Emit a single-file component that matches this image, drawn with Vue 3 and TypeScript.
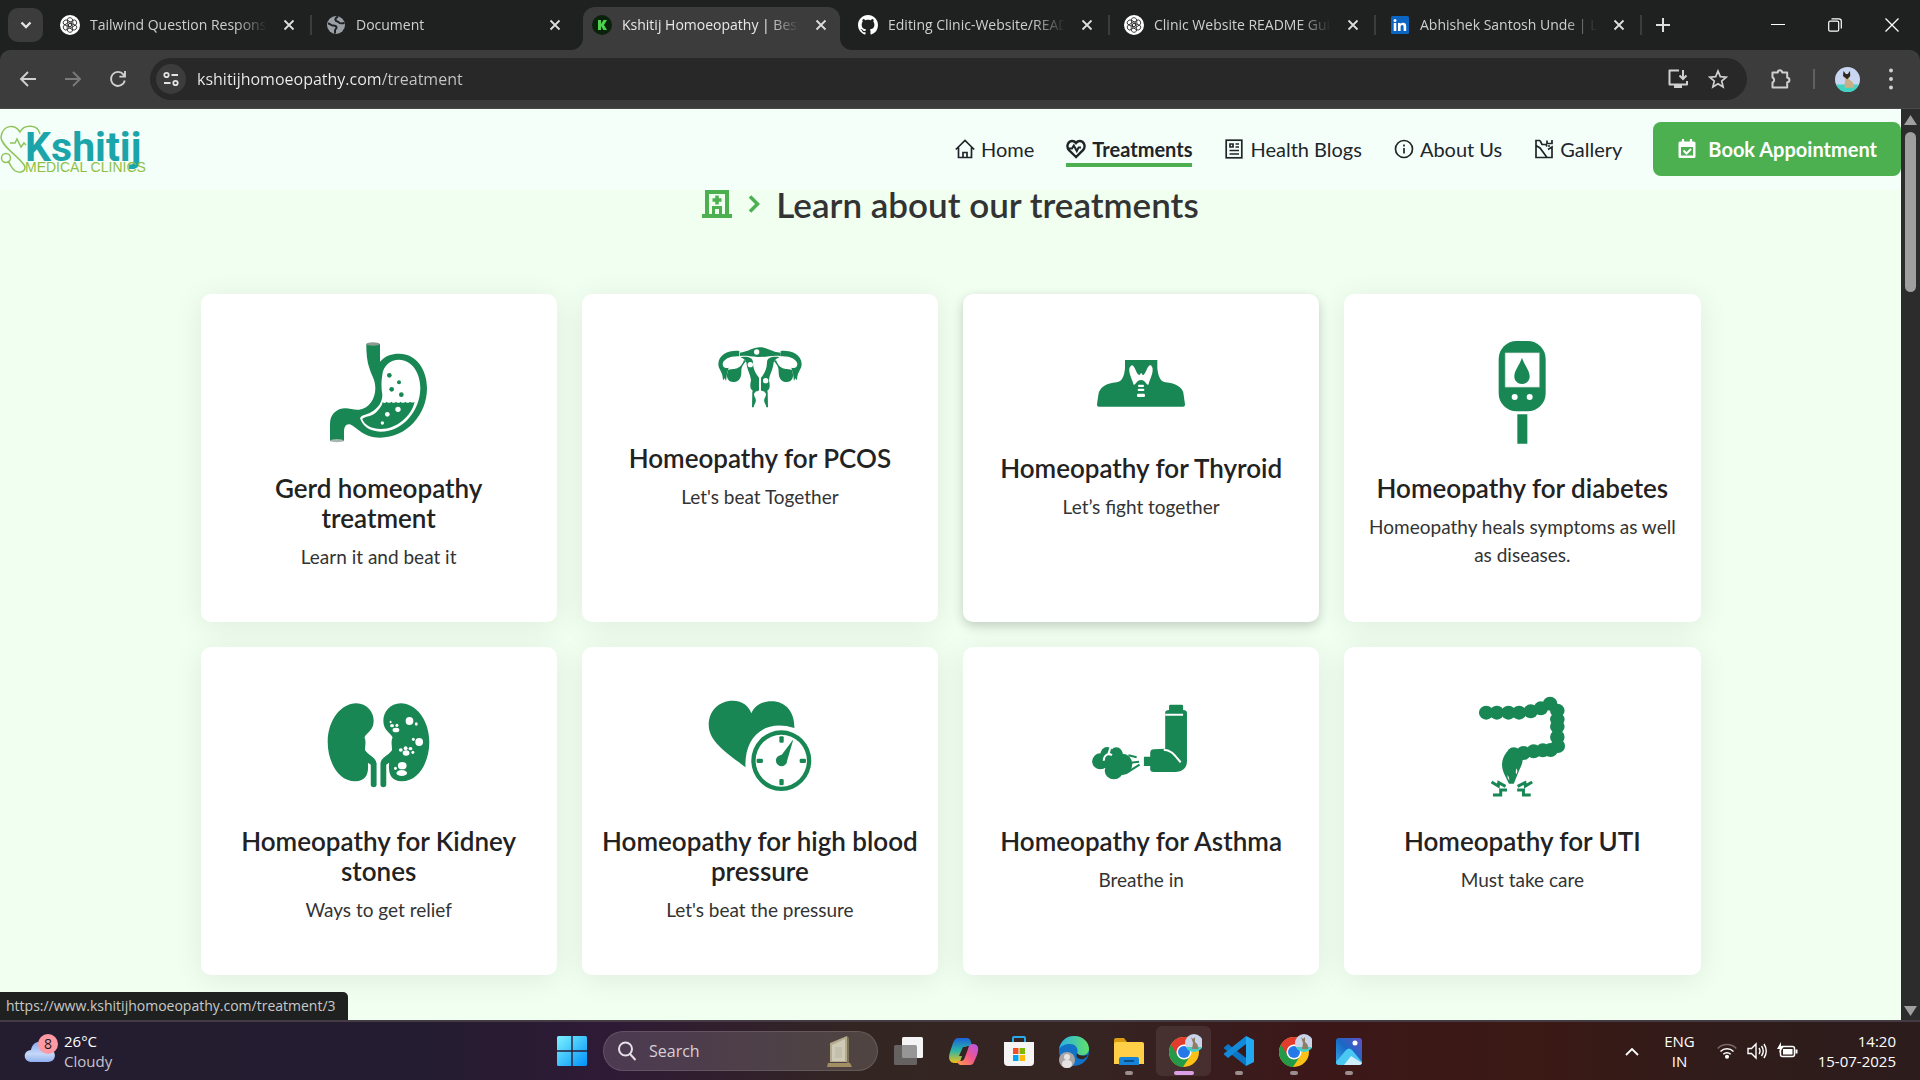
<script setup lang="ts">
import { ref } from 'vue'

interface Tab {
  title: string
  icon: 'gpt' | 'globe' | 'kshitij' | 'github' | 'linkedin'
  active?: boolean
  divider?: boolean
}

interface NavLink {
  label: string
  icon: 'home' | 'heart' | 'news' | 'info' | 'image'
  href: string
  active?: boolean
}

interface Treatment {
  id: number
  title: string
  text: string
  art: string
  hovered?: boolean
}

interface TaskApp {
  name: string
  running?: boolean
  active?: boolean
}

const url = ref('kshitijhomoeopathy.com/treatment')
const query = ref('')

const tabs: Tab[] = [
  { title: 'Tailwind Question Response', icon: 'gpt', divider: true },
  { title: 'Document', icon: 'globe' },
  { title: 'Kshitij Homoeopathy | Best H', icon: 'kshitij', active: true },
  { title: 'Editing Clinic-Website/READ', icon: 'github', divider: true },
  { title: 'Clinic Website README Guide', icon: 'gpt', divider: true },
  { title: 'Abhishek Santosh Unde | Link', icon: 'linkedin', divider: true },
]

const links: NavLink[] = [
  { label: 'Home', icon: 'home', href: '#home' },
  { label: 'Treatments', icon: 'heart', href: '#treatments', active: true },
  { label: 'Health Blogs', icon: 'news', href: '#blogs' },
  { label: 'About Us', icon: 'info', href: '#about' },
  { label: 'Gallery', icon: 'image', href: '#gallery' },
]

const treatments: Treatment[] = [
  { id: 1, title: 'Gerd homeopathy treatment', text: 'Learn it and beat it', art: 'stomach' },
  { id: 2, title: 'Homeopathy for PCOS', text: "Let's beat Together", art: 'uterus' },
  { id: 3, title: 'Homeopathy for Thyroid', text: 'Let’s fight together', art: 'thyroid', hovered: true },
  { id: 4, title: 'Homeopathy for diabetes', text: 'Homeopathy heals symptoms as well as diseases.', art: 'meter' },
  { id: 5, title: 'Homeopathy for Kidney stones', text: 'Ways to get relief', art: 'kidney' },
  { id: 6, title: 'Homeopathy for high blood pressure', text: "Let's beat the pressure", art: 'pressure' },
  { id: 7, title: 'Homeopathy for Asthma', text: 'Breathe in', art: 'inhaler' },
  { id: 8, title: 'Homeopathy for UTI', text: 'Must take care', art: 'tract' },
]

const colonBeads: [number, number][] = [
  [1107, 218], [1129, 218], [1153, 218], [1175, 218], [1199, 214], [1220, 205], [1239, 191],
  [1254, 212], [1254, 238], [1254, 260], [1254, 291], [1255, 318], [1240, 330], [1224, 331],
  [1205, 334], [1184, 339], [1164, 343],
]

const apps: TaskApp[] = [
  { name: 'Task View' },
  { name: 'Copilot' },
  { name: 'Store' },
  { name: 'Edge' },
  { name: 'Explorer', running: true },
  { name: 'Chrome', running: true, active: true },
  { name: 'Code', running: true },
  { name: 'Chrome Profile', running: true },
  { name: 'Photos', running: true },
]
</script>

<template>
  <div class="screen">
    <div class="tabstrip">
      <button class="tab-search" aria-label="Search tabs">
        <svg width="16" height="16" viewBox="0 0 16 16"><path d="M3.500 5.500 8 10l4.500-4.500" fill="none" stroke="#e3e3e3" stroke-width="2.400" /></svg>
      </button>
      <div v-for="(tab, i) in tabs" :key="i" class="tab" :class="{ active: tab.active, divider: tab.divider }">
        <svg v-if="tab.active" class="flare left" width="12" height="12" viewBox="0 0 12 12"><path d="M12 0v12H0A12 12 0 0 0 12 0z" fill="#3c3c3c" /></svg>
        <svg v-if="tab.active" class="flare right" width="12" height="12" viewBox="0 0 12 12"><path d="M0 0v12h12A12 12 0 0 1 0 0z" fill="#3c3c3c" /></svg>
        <svg class="favicon" width="20" height="20" viewBox="0 0 20 20">
          <template v-if="tab.icon === 'gpt'">
            <circle cx="10" cy="10" r="10" fill="#fff" />
            <g fill="none" stroke="#1a1a1a" stroke-width=".8">
              <path v-for="k in 6" :key="k" :transform="`rotate(${k * 60} 10 10)`" d="M7.600 3.800a2.900 2.900 0 0 1 5.200 1.700v4.600L10 11.700M7.600 3.800v4.400" />
            </g>
          </template>
          <template v-else-if="tab.icon === 'globe'">
            <circle cx="10" cy="10" r="9" fill="#9aa0a6" />
            <path d="M2 8.500c2 0 3 2 5 2s3 0 3.500 1.500-1.500 2-1.500 3.500v3M12 1.500c-1.500 1-3 1.500-2.500 3.500s3 1 3.500 2.500 3 1 5.500.5" fill="none" stroke="#202124" stroke-width="2" />
          </template>
          <template v-else-if="tab.icon === 'kshitij'">
            <circle cx="10" cy="10" r="10" fill="#0a210c" />
            <path d="M6 5h3v4l2.500-4H15l-3 5 3 5h-3.500L9 11v4H6z" fill="#4fd14f" />
          </template>
          <template v-else-if="tab.icon === 'github'">
            <path transform="scale(1.250)" fill="#fff" d="M8 0C3.580 0 0 3.580 0 8c0 3.540 2.290 6.530 5.470 7.590.4.070.55-.17.55-.38 0-.19-.01-.82-.01-1.490-2.010.37-2.530-.49-2.690-.94-.09-.23-.48-.94-.82-1.130-.28-.15-.68-.52-.01-.53.63-.01 1.080.58 1.230.82.72 1.210 1.870.87 2.330.66.07-.52.28-.87.51-1.070-1.780-.2-3.640-.89-3.640-3.950 0-.87.31-1.590.82-2.150-.08-.2-.36-1.020.08-2.120 0 0 .67-.21 2.200.82.64-.18 1.320-.27 2-.27s1.360.09 2 .27c1.530-1.040 2.200-.82 2.200-.82.44 1.100.16 1.920.08 2.120.51.56.82 1.270.82 2.150 0 3.070-1.870 3.750-3.650 3.950.29.25.54.73.54 1.480 0 1.070-.01 1.930-.01 2.200 0 .21.15.46.55.38A8.010 8.010 0 0 0 16 8c0-4.420-3.580-8-8-8z" />
          </template>
          <template v-else>
            <rect x="1" y="1" width="18" height="18" rx="1.500" fill="#0a66c2" />
            <path d="M3.700 8h2.600v8H3.700zM5 4a1.500 1.500 0 1 1 0 3 1.500 1.500 0 0 1 0-3zM8 8h2.500v1.100C11 8.300 12 7.800 13 7.800c2.600 0 3.200 1.600 3.200 3.900V16h-2.600v-3.900c0-1-.1-2.100-1.400-2.100s-1.600 1-1.600 2V16H8z" fill="#fff" />
          </template>
        </svg>
        <span class="tab-title">{{ tab.title }}</span>
        <button class="icon-button" aria-label="Close tab">
          <svg width="12" height="12" viewBox="0 0 12 12"><path d="m1.500 1.500 9 9m0-9-9 9" stroke="#dedede" stroke-width="1.800" /></svg>
        </button>
      </div>
      <button class="icon-button new-tab" aria-label="New tab">
        <svg width="14" height="14" viewBox="0 0 14 14"><path d="M7 0v14M0 7h14" stroke="#dedede" stroke-width="2" /></svg>
      </button>
      <div class="window-buttons">
        <button aria-label="Minimize"><svg width="14" height="14" viewBox="0 0 14 14"><path d="M0 6.500h14" stroke="#fff" /></svg></button>
        <button aria-label="Restore">
          <svg width="14" height="14" viewBox="0 0 14 14" fill="none" stroke="#fff" stroke-width="1.200"><rect x=".7" y="3.200" width="10" height="10" rx="1.500" /><path d="M3.500 .8H11A2.300 2.300 0 0 1 13.300 3v7.500" /></svg>
        </button>
        <button aria-label="Close"><svg width="14" height="14" viewBox="0 0 14 14"><path d="m.5.500 13 13m0-13-13 13" stroke="#fff" stroke-width="1.300" /></svg></button>
      </div>
    </div>

    <div class="toolbar">
      <div class="history">
        <button class="icon-button" aria-label="Back"><svg width="18" height="18" viewBox="0 0 18 18"><path d="M17 9H2.500M9 2 2 9l7 7" fill="none" stroke="#d0d0d0" stroke-width="1.900" /></svg></button>
        <button class="icon-button" aria-label="Forward"><svg width="18" height="18" viewBox="0 0 18 18"><path d="M1 9h14.500M9 2l7 7-7 7" fill="none" stroke="#7a7a7a" stroke-width="1.900" /></svg></button>
        <button class="icon-button" aria-label="Reload"><svg width="18" height="18" viewBox="0 0 18 18"><path d="M15.800 10.500A7 7 0 1 1 14.500 4.600L16 6.200M16 1v5.600h-5.600" fill="none" stroke="#d0d0d0" stroke-width="1.900" /></svg></button>
      </div>
      <div class="omnibox">
        <button class="site-info" aria-label="Site information">
          <svg width="16" height="16" viewBox="0 0 16 16" fill="none" stroke="#e3e3e3" stroke-width="1.800"><circle cx="3.500" cy="4" r="2.200" /><path d="M8.500 4H15M1 12h6.500" /><circle cx="12.500" cy="12" r="2.200" /></svg>
        </button>
        <input v-model="url" class="url" type="text" aria-label="Address" />
        <button class="icon-button" aria-label="Install">
          <svg width="22" height="22" viewBox="0 0 22 22"><path d="M12 2.500H2.500V16.500H20V13" fill="none" stroke="#d0d0d0" stroke-width="2" stroke-linejoin="round" /><path d="M7 17h8v3H7z" fill="#d0d0d0" /><path d="M16 2v8.500M12.500 7.500 16 11l3.500-3.500" fill="none" stroke="#d0d0d0" stroke-width="2" /></svg>
        </button>
        <button class="icon-button" aria-label="Bookmark">
          <svg width="20" height="20" viewBox="0 0 20 20"><path d="m10 2 2.300 5.600 6 .5-4.600 3.900 1.400 5.900L10 14.700l-5.100 3.200 1.400-5.900-4.600-3.900 6-.5z" fill="none" stroke="#d0d0d0" stroke-width="1.700" /></svg>
        </button>
      </div>
      <div class="actions">
        <button class="icon-button" aria-label="Extensions">
          <svg width="22" height="22" viewBox="0 0 22 22"><path d="M2.500 4.500h5.300a2.200 2.200 0 0 1 4.400 0h5v5.300a2.200 2.200 0 0 1 0 4.400v5.300H2.500v-5a2.700 2.700 0 0 0 0-5z" fill="none" stroke="#d0d0d0" stroke-width="2" stroke-linejoin="round" /></svg>
        </button>
        <span class="rule"></span>
        <button class="icon-button" aria-label="Profile">
          <svg width="25" height="25" viewBox="0 0 25 25">
            <circle cx="12.500" cy="12.500" r="12.500" fill="#c9d6f2" /><path d="M1 17.500h23a12.500 12.500 0 0 1-23 0z" fill="#41d3c2" />
            <path d="M8.500 4l2.300 3h2L15 4l.3 5-2 3c3 1.500 6 4 6.200 8.500l-9.500.5c-1-4 .5-6 .3-9L8 9z" fill="#c9ae87" /><path d="M8.500 4l2.300 3h2L15 4l.2 5-2.900 3.200L8 9z" fill="#2d2622" />
          </svg>
        </button>
        <button class="icon-button" aria-label="Menu"><svg width="20" height="24" viewBox="0 0 20 24" fill="#d0d0d0"><circle cx="10" cy="3.500" r="2" /><circle cx="10" cy="12" r="2" /><circle cx="10" cy="20.500" r="2" /></svg></button>
      </div>
    </div>

    <div class="viewport">
      <div class="site">
        <header class="site-header">
          <a class="logo" href="#home" aria-label="Kshitij Medical Clinics">
            <svg width="150" height="56" viewBox="0 0 150 56">
              <g fill="none" stroke="#8fc45a" stroke-width="1.500">
                <path d="M40 13C38 3 24 3 20 11 15 3 3 3 1 16c0 10 22 22 24 30 0 7-10 7-14-1l-3-5" /><circle cx="6" cy="37" r="4.500" /><path d="M10 22h5l2-4 4 8 3-4 2 2" />
              </g>
              <text x="25" y="40" class="logo-name">Kshitij</text>
              <text x="25" y="51" class="logo-sub">MEDICAL CLINICS</text>
            </svg>
          </a>
          <nav class="links">
            <a v-for="link in links" :key="link.label" :href="link.href" :class="{ current: link.active }">
              <svg width="20" height="20" viewBox="0 0 20 20" fill="none" stroke="currentColor" stroke-width="1.700">
                <path v-if="link.icon === 'home'" d="M.8 10.500 10 1.500l9.200 9M3.500 8.500v10h13v-10M8 18.500v-5h4v5" />
                <template v-else-if="link.icon === 'heart'"><path d="M10 18 3 11.200C-.5 7 2.500 2 6.200 2 8.500 2 10 4 10 4s1.500-2 3.800-2C17.500 2 20.500 7 17 11.200z" stroke-width="2.400" /><path d="M1 9.500h5l1.800-3 3 5.500 1.800-3.500H15" stroke-width="2" /></template>
                <template v-else-if="link.icon === 'news'"><rect x="2.200" y="1.200" width="15.600" height="17.600" /><path d="M6 5h3v3H6zM11.500 5H15M11.500 8H15M5.500 11.500H15M5.500 15H15" /></template>
                <template v-else-if="link.icon === 'info'"><circle cx="10" cy="10" r="8.500" /><path d="M10 9v5.500M10 5.500v2" /></template>
                <path v-else d="M6 1.500H2v5l4 2.500 7 9.500M2 6v12.500H18V8l-4 2.500M6 1.500 8 5.500h4l1 2M13 1.500v3h5V1M14 7h2" />
              </svg>
              <span>{{ link.label }}</span>
            </a>
          </nav>
          <button class="book">
            <svg width="20" height="20" viewBox="0 0 20 20"><path d="M3 2.500h14a1.500 1.500 0 0 1 1.500 1.500v13.500A1.500 1.500 0 0 1 17 19H3a1.500 1.500 0 0 1-1.500-1.500V4A1.500 1.500 0 0 1 3 2.500zM4 8v8.500h12V8z" fill="#fff" fill-rule="evenodd" /><path d="M6 0v5M14 0v5" stroke="#fff" stroke-width="2.200" /><path d="m6.500 11.500 3 3 4.500-4.500" fill="none" stroke="#fff" stroke-width="2" /></svg>
            <span>Book Appointment</span>
          </button>
        </header>

        <main>
          <h1 class="heading">
            <svg width="30" height="28" viewBox="0 0 30 28"><path d="M3 0h24v24h3v4H0v-4h3zM7 4v20h3v-8h10v8h3V4zM13 19v5h4v-5z" fill="#4caf50" fill-rule="evenodd" /><path d="M15 5.500v9M10.500 10h9" stroke="#4caf50" stroke-width="3.500" /></svg>
            <svg width="12" height="18" viewBox="0 0 12 18"><path d="m2 1.500 7.500 7.500L2 16.500" fill="none" stroke="#4caf50" stroke-width="3.500" /></svg>
            <span>Learn about our treatments</span>
          </h1>

          <section class="grid">
            <a v-for="item in treatments" :key="item.id" class="card" :class="{ hovered: item.hovered }" :href="`#treatment-${item.id}`">
              <svg v-if="item.art === 'stomach'" width="120" height="154" viewBox="387 117 360 462" fill="#198754">
                <path d="M529 192h41v53c16-18 34-24 57-24 52 0 84 48 84 104 0 78-60 148-141 148-50 0-68-30-90-40-12-3-18 8-18 22v28h-42v-52c0-28 20-46 46-46 14 0 28 6 42 4 30-3 48-34 48-64 0-24-8-32-16-55-10-26-11-52-11-78z" />
                <path fill="#fff" d="M577 284c3-28 25-45 50-45 40 0 64 42 64 84 0 70-54 132-119 132-32 0-54-16-62-40 3-10 20-10 33-18 22-12 34-32 34-52-3-20-4-40 0-61z" />
                <path d="M578 366q6 6 12-1 7 7 14 0 7 7 14 0 7 7 14 0 7 7 14 0 7 7 14 0 7 5 14 1c-10 42-54 81-101 81-28 0-48-10-56-29 3-9 26-7 39-19 12-10 21-24 22-33z" />
                <circle cx="598" cy="286" r="7" /><circle cx="627" cy="307" r="6" /><circle cx="605" cy="328" r="7" /><circle cx="634" cy="344" r="7" />
                <g fill="#fff"><circle cx="624" cy="388" r="8" /><circle cx="592" cy="403" r="7" /><circle cx="577" cy="429" r="5" /></g>
                <ellipse cx="549" cy="192" rx="20" ry="5" fill="#8c9a91" /><ellipse cx="441" cy="482" rx="20" ry="5" fill="#a6b8ae" />
              </svg>
              <svg v-else-if="item.art === 'uterus'" width="120" height="124" viewBox="390 117 360 372" fill="#198754">
                <path d="M510 218c28-3 36-16 60-16s32 13 62 16v10c-26-3-38 3-62 3s-34-6-60-3z" />
                <g v-for="side in ['', 'translate(1140 0) scale(-1 1)']" :key="side" :transform="side">
                  <path d="M508 213c-30-3-63 10-63 40 0 16 14 22 14 48l5-6 4 8 3-22 5-18c-10 3-18 0-18-12 3-14 24-24 50-22z" />
                  <path d="M474 270c14-6 36 4 48-30l6 4c-12 14-14 18-14 34 0 18-10 28-24 28-16 0-24-16-16-34z" />
                  <path d="M511 232c18-4 38 0 38 15 0 20 8 34 18 46v38c-6 6-10 0-12 8l-6-6c-10-6-9-18-6-32-2-20-12-30-14-54-4-8-10-12-18-15zM547 334h8c-2 6-4 8-2 14 6 12 6 16 0 26l-2 8h-5z" />
                </g>
                <g fill="#fff"><circle cx="560" cy="216" r="8" /><circle cx="541" cy="254" r="8" /><circle cx="587" cy="302" r="8" /></g>
              </svg>
              <svg v-else-if="item.art === 'thyroid'" width="120" height="134" viewBox="393 117 360 402" fill="#198754">
                <path d="M525 240h97v25c2 24 10 40 24 42 32 3 55 16 55 38l4 28q1 7-5 7H446q-6 0-5-7l4-28c2-22 25-36 55-38 16-2 23-18 25-42z" />
                <g fill="#fff"><path d="M545 256c8-4 14 26 21 28q3 2 5-2 2-6 5 0 2 4 5 2c8-6 12-32 22-28 12 12 0 34-8 58-6 3-8-14-22-14s-16 17-22 14c-8-24-22-48-6-58z" /><rect x="564" y="314" width="18" height="7" rx="3" /><rect x="563" y="326" width="20" height="7" rx="3" /><rect x="561" y="341" width="24" height="10" rx="4" /></g>
              </svg>
              <svg v-else-if="item.art === 'meter'" width="120" height="154" viewBox="397 117 360 462" fill="#198754">
                <rect x="507" y="183" width="141" height="211" rx="54" /><path d="M526 218h104v104H526z" fill="#fff" stroke="#6da58a" stroke-width="2" />
                <path d="M577 233c8 24 23 38 23 56 0 14-10 23-23 23s-23-9-23-23c0-18 15-32 23-56zM563 403h30v88h-30z" /><circle cx="555" cy="351" r="9" fill="#fff" /><circle cx="600" cy="351" r="9" fill="#fff" />
              </svg>
              <svg v-else-if="item.art === 'kidney'" width="120" height="154" viewBox="266 96 248 462" preserveAspectRatio="none" fill="#198754">
                <g v-for="side in ['', 'translate(778 0) scale(-1 1)']" :key="side" :transform="side">
                  <path d="M343 190c22 0 36 26 36 52 0 30-14 34-19 50 4 14 1 26 1 38 6 16 24 22 24 42v64q-1 6-6 6t-6-6v-62l-6-6c2 30-2 56-26 56-36 0-57-60-57-118 0-66 28-116 59-116z" />
                </g>
                <g fill="#fff"><ellipse cx="453" cy="243" rx="8" ry="12" /><ellipse cx="467" cy="252" rx="3" ry="5" /><ellipse cx="425" cy="270" rx="7" ry="7" /><ellipse cx="417" cy="257" rx="4" ry="5" /><ellipse cx="427" cy="256" rx="3" ry="5" /><ellipse cx="414" cy="246" rx="2" ry="4" /><ellipse cx="473" cy="306" rx="8" ry="12" /><ellipse cx="461" cy="298" rx="3" ry="5" /><ellipse cx="446" cy="339" rx="7" ry="8" /><ellipse cx="435" cy="330" rx="4" ry="5" /><ellipse cx="445" cy="325" rx="4" ry="6" /><ellipse cx="455" cy="326" rx="4" ry="5" /><ellipse cx="460" cy="337" rx="3" ry="5" /><ellipse cx="438" cy="377" rx="9" ry="11" /><ellipse cx="437" cy="399" rx="11" ry="9" /><ellipse cx="424" cy="385" rx="3" ry="5" /></g>
              </svg>
              <svg v-else-if="item.art === 'pressure'" width="120" height="154" viewBox="1052 96 248 462" preserveAspectRatio="none" fill="#198754">
                <path d="M1146 382c-34-40-76-74-76-128 0-40 20-72 50-72 20 0 34 18 38 38 6-20 20-36 42-36 30 0 48 34 47 80-60-28-104 24-101 118z" />
                <path d="M1220 271a62 91 0 1 1 0 182 62 91 0 0 1 0-182zm0 13a53 78 0 1 0 0 156 53 78 0 0 0 0-156z" fill-rule="evenodd" />
                <path d="M1245 298 1232 362c0 22-23 22-23 0 0-12 6-16 12-18z" /><rect x="1216" y="289" width="9" height="19" rx="3" /><rect x="1216" y="417" width="9" height="19" rx="3" /><rect x="1169" y="356" width="13" height="13" rx="3" /><rect x="1258" y="356" width="13" height="13" rx="3" />
              </svg>
              <svg v-else-if="item.art === 'inhaler'" width="120" height="154" viewBox="270 96 248 462" preserveAspectRatio="none" fill="#198754">
                <path d="M455 194h23q3 0 3 4v12q8 0 8 10v144c0 20-10 32-24 32h-45q-6 0-7-6v-12h-13v-28h13v-12q1-10 7-10l24-2V218q0-8 8-8v-12q0-4 3-4z" />
                <ellipse cx="310" cy="364" rx="17" ry="24" /><ellipse cx="324" cy="345" rx="14" ry="24" /><ellipse cx="343" cy="346" rx="14" ry="24" /><ellipse cx="338" cy="392" rx="19" ry="26" /><ellipse cx="356" cy="373" rx="20" ry="32" /><ellipse cx="335" cy="370" rx="18" ry="26" />
                <g fill="none" stroke="#198754" stroke-width="2"><path vector-effect="non-scaling-stroke" d="M368 346l17 6M372 368l18-3M365 398l26-24" /></g>
                <g fill="none" stroke="#fff" stroke-width="2"><path vector-effect="non-scaling-stroke" d="M444 224h37M441 329c16 0 24 20 35 38M317 362c0-18 10-24 17-16M331 322l-4 18" /></g>
              </svg>
              <svg v-else width="120" height="154" viewBox="1057 96 248 462" preserveAspectRatio="none" fill="#198754">
                <ellipse v-for="([x, y], n) in colonBeads" :key="n" :cx="x" :cy="y" rx="15" ry="21" />
                <path d="M1150 335c-14 24-12 50-4 72l8 24h10l10-36c4-14 10-26 8-46z" />
                <path d="M1170 385q3 8 0 18-4-6 0-18zM1151 405q4 6 4 17-5-6-4-17z" fill="#fff" />
                <path d="M1118 426l14 12 1-10 14 11M1202 426l-14 12-1-10-15 11M1121 465h16v-15h13M1199 465h-15v-15h-13" fill="none" stroke="#198754" stroke-width="3" vector-effect="non-scaling-stroke" />
              </svg>
              <h2>{{ item.title }}</h2>
              <p>{{ item.text }}</p>
            </a>
          </section>
        </main>
      </div>
      <div class="scrollbar">
        <svg width="13" height="11" viewBox="0 0 13 11"><path d="M6.500 0 13 10H0z" fill="#a0a0a0" /></svg>
        <span class="thumb"></span>
        <svg width="13" height="11" viewBox="0 0 13 11"><path d="M6.500 11 13 1H0z" fill="#a0a0a0" /></svg>
      </div>
      <div class="status">https://www.kshitijhomoeopathy.com/treatment/3</div>
    </div>

    <footer class="taskbar">
      <button class="weather">
        <svg width="34" height="34" viewBox="0 0 34 34">
          <defs><linearGradient id="cloud" x1="0" y1="0" x2="0" y2="1"><stop offset="0" stop-color="#86a8f0" /><stop offset=".6" stop-color="#c6d8f7" /><stop offset="1" stop-color="#8fb0ef" /></linearGradient></defs>
          <path d="M8 28c-9 0-10-11-1-12C9 5 23 5 25 15c8 1 8 13-1 13z" fill="url(#cloud)" /><circle cx="24" cy="10" r="10" fill="#ff99a4" /><text x="24" y="15" text-anchor="middle" font-size="14" fill="#1b1b1b">8</text>
        </svg>
        <span class="weather-text"><span>26°C</span><span class="dim">Cloudy</span></span>
      </button>

      <div class="dock">
        <button class="app" aria-label="Start">
          <svg width="30" height="30" viewBox="0 0 30 30"><defs><linearGradient id="win" x1="0" y1="0" x2="1" y2="1"><stop offset="0" stop-color="#7df3ff" /><stop offset="1" stop-color="#0091f8" /></linearGradient></defs><path d="M0 1.500Q0 0 1.500 0H14.300V14.300H0zM15.700 0H28.500Q30 0 30 1.500V14.300H15.700zM0 15.700H14.300V30H1.500Q0 30 0 28.500zM15.700 15.700H30V28.500Q30 30 28.500 30H15.700z" fill="url(#win)" /></svg>
        </button>
        <label class="search">
          <svg width="20" height="20" viewBox="0 0 20 20" fill="none" stroke="#e8e0e8" stroke-width="2"><circle cx="8.500" cy="8" r="6.500" /><path d="m13 13 5.500 6" /></svg>
          <input v-model="query" type="text" placeholder="Search" />
          <svg width="26" height="32" viewBox="0 0 26 32"><path d="M3 8 20 1v26H3z" fill="#b5aa8c" /><path d="M5 10 18 4v22H5z" fill="#cfcab6" /><path d="M20 1l2 2v25h-2z" fill="#7d7256" /><path d="M8 12h7v11H8z" fill="#c3bfac" /><path d="M1 28h22l2 4H0z" fill="#a38e63" /></svg>
        </label>
        <button v-for="app in apps" :key="app.name" class="app" :class="{ active: app.active, running: app.running }" :aria-label="app.name">
          <svg width="36" height="36" viewBox="0 0 36 36">
            <template v-if="app.name === 'Task View'"><rect x="11" y="4" width="21" height="21" rx="1.500" fill="#f4f4f4" /><rect x="3" y="12" width="23" height="20" rx="1.500" fill="#777" fill-opacity=".75" /></template>
            <template v-else-if="app.name === 'Copilot'">
              <defs><linearGradient id="cpa" x1="0" y1="0" x2="0" y2="1"><stop offset="0" stop-color="#1b62d8" /><stop offset=".5" stop-color="#2bb5a8" /><stop offset="1" stop-color="#f2c014" /></linearGradient><linearGradient id="cpb" x1="1" y1="0" x2="0" y2="1"><stop offset="0" stop-color="#b157ee" /><stop offset=".5" stop-color="#f0568c" /><stop offset="1" stop-color="#ffa144" /></linearGradient></defs>
              <path d="M12 5h9q3 0 4 4l1 4h-4q-3 0-4 4l-3 9q-1 4-4 4H9c-6 0-7-5-5-11l3-9q2-5 5-5z" fill="url(#cpa)" /><path d="M24 32h-9q-3 0-4-4h4q3 0 4-4l3-8q1-5 5-5c6 0 6 5 4 11l-3 7q-1 3-4 3z" fill="url(#cpb)" /><path d="M17 14h4l-3 9h-5z" fill="#33251f" />
            </template>
            <template v-else-if="app.name === 'Store'"><path d="M12 10V5q0-1 1-1h10q1 0 1 1v5" fill="none" stroke="#29a9ea" stroke-width="2" /><path d="M3 9h30v20q0 4-4 4H7q-4 0-4-4z" fill="#f5f5f5" /><path d="M12 15h5.500v6H12z" fill="#f25022" /><path d="M18.500 15H24v6h-5.500z" fill="#7fba00" /><path d="M12 22h5.500v6H12z" fill="#00a4ef" /><path d="M18.500 22H24v6h-5.500z" fill="#ffb900" /></template>
            <template v-else-if="app.name === 'Edge'">
              <defs><linearGradient id="edge" x1="0" y1="0" x2="1" y2="0"><stop offset="0" stop-color="#2bb0e8" /><stop offset="1" stop-color="#5fe06a" /></linearGradient></defs>
              <circle cx="18" cy="18" r="15" fill="#1272c8" /><path d="M3 16C5 7 11 3 18 3c9 0 15 6 15 13 0 6-8 8-12 5 2-5-1-10-7-10-5 0-9 2-11 5z" fill="url(#edge)" /><path d="M21 20q3 4 11 2-3 5-8 4-5-1-3-6z" fill="#33251f" /><circle cx="11" cy="27" r="8" fill="#a9a6a5" /><circle cx="11" cy="24" r="3" fill="#e6e3e2" /><path d="M6 31q0-4 5-4t5 4-5 4-5-4z" fill="#e6e3e2" />
            </template>
            <template v-else-if="app.name === 'Explorer'"><path d="M3 7q0-2 2-2h8l3 4h15v7H3z" fill="#d89b12" /><path d="M3 11q0-2 2-2h26q2 0 2 2v20H3z" fill="#ffcf48" /><path d="M8 32v-6q0-2 2-2h16q2 0 2 2v6z" fill="#1583d8" /><path d="M13 28h10" stroke="#0b4d87" stroke-width="2" /></template>
            <template v-else-if="app.name.startsWith('Chrome')">
              <circle cx="18" cy="19" r="15" fill="#fbc116" /><path d="M18 19 5 11.500a15 15 0 0 0 12 22.500l7.500-11.500z" fill="#229a48" /><path d="M5 11.500A15 15 0 0 1 31 11.500H18L11.500 22.500z" fill="#e33b2e" /><circle cx="18" cy="19" r="7.500" fill="#fff" /><circle cx="18" cy="19" r="6" fill="#2678e8" />
              <circle cx="28" cy="10" r="9" fill="#c9d3ea" /><path d="M20 14h16a9 9 0 0 1-16 0z" fill="#45cfc2" /><path d="M25 4l2 2 2-2v5q4 3 3 7h-6l1-6z" fill="#8f7d66" />
            </template>
            <template v-else-if="app.name === 'Code'"><path d="M25 3 33 7v22l-8 4z" fill="#23a9f2" /><path d="M3 14.500 7 11l18 14v8L3 15.500z" fill="#0a76c4" /><path d="M3 21.500 7 25l18-14V3L3 20.500z" fill="#1389d8" /></template>
            <template v-else>
              <defs><linearGradient id="photo" x1="1" y1="0" x2="0" y2="1"><stop offset="0" stop-color="#654fc2" /><stop offset=".5" stop-color="#1769c5" /><stop offset="1" stop-color="#3aa7ea" /></linearGradient></defs>
              <rect x="5" y="5" width="26" height="27" rx="3" fill="url(#photo)" /><circle cx="24" cy="10" r="2.500" fill="#fff" /><path d="M5 29 15 17q3-3 6 0l10 12q0 3-3 3H8q-3 0-3-3z" fill="#49c8f3" /><path d="m13 32 7-9 11 7q-1 2-3 2z" fill="#d0eefa" />
            </template>
          </svg>
        </button>
      </div>

      <div class="tray">
        <button class="tray-button" aria-label="Show hidden icons"><svg width="14" height="9" viewBox="0 0 14 9"><path d="m1 8 6-6 6 6" fill="none" stroke="#fff" stroke-width="1.800" /></svg></button>
        <div class="language"><span>ENG</span><span>IN</span></div>
        <div class="signals">
          <svg width="20" height="16" viewBox="0 0 20 16" fill="none" stroke="#fff" stroke-width="1.500"><path d="M.7 5.500a13 13 0 0 1 18.600 0" stroke="#7a6867" /><path d="M3.500 8.500a9.200 9.200 0 0 1 13 0M6.300 11.200a5.300 5.300 0 0 1 7.400 0" /><circle cx="10" cy="13.800" r="1.300" fill="#fff" /></svg>
          <svg width="20" height="18" viewBox="0 0 20 18" fill="none" stroke="#fff" stroke-width="1.400"><path d="M1 6.500h3.500L9 2v14l-4.500-4.500H1zM12 6q2 3 0 6M14.500 4q3.500 5 0 10M17 2q4.500 7 0 14" /></svg>
          <svg width="21" height="18" viewBox="0 0 21 18"><rect x="3.500" y="4.500" width="14" height="10" rx="2" fill="none" stroke="#fff" stroke-width="1.500" /><path d="M6 7h9.500v5.500H6zM18.500 7.500h2v4h-2z" fill="#fff" /><path d="M4 0 0 7h3l-1 4 4.500-6H4z" fill="#fff" /></svg>
        </div>
        <div class="clock"><span>14:20</span><span>15-07-2025</span></div>
      </div>
    </footer>
  </div>
</template>

<style>
body {
  margin: 0;
  background: #1f2120;
}
</style>

<style scoped>
* {
  box-sizing: border-box;
}
.screen {
  display: flex;
  flex-direction: column;
  height: 100vh;
  overflow: hidden;
  font-family: "Open Sans", "Noto Sans", sans-serif;
  font-size: 14px;
}
button {
  display: flex;
  align-items: center;
  justify-content: center;
  padding: 0;
  border: 0;
  background: none;
  font: inherit;
  color: inherit;
}
svg {
  flex: none;
  display: block;
}
.icon-button {
  width: 24px;
  height: 24px;
  flex: none;
}

/* Browser chrome */
.tabstrip {
  display: flex;
  align-items: center;
  height: 50px;
  flex: none;
  padding-left: 8px;
  background: #1f2120;
  color: #cfcfcf;
}
.tab-search {
  width: 35px;
  height: 34px;
  flex: none;
  margin-right: 3px;
  border-radius: 10px;
  background: #3c3c3c;
}
.tab {
  position: relative;
  display: flex;
  align-items: center;
  flex: 0 1 266px;
  min-width: 0;
  height: 50px;
  padding: 0 11px 0 14px;
}
.tab.divider::after {
  content: "";
  position: absolute;
  right: 0;
  top: 15px;
  width: 2px;
  height: 20px;
  background: #3c3c3c;
}
.tab.active {
  color: #e8e8e8;
}
.tab.active::before {
  content: "";
  position: absolute;
  inset: 7px 4px 0 5px;
  border-radius: 12px 12px 0 0;
  background: #3c3c3c;
}
.flare {
  position: absolute;
  bottom: 0;
}
.flare.left {
  left: -7px;
}
.flare.right {
  right: -8px;
}
.favicon,
.tab-title,
.tab .icon-button {
  position: relative;
}
.tab-title {
  flex: 1;
  min-width: 0;
  margin: 0 10px;
  overflow: hidden;
  white-space: nowrap;
  line-height: 20px;
  mask-image: linear-gradient(90deg, #000 82%, transparent);
}
.new-tab {
  margin-left: 9px;
}
.window-buttons {
  display: flex;
  margin-left: auto;
}
.window-buttons button {
  width: 57px;
  height: 50px;
}
.toolbar {
  display: flex;
  align-items: center;
  height: 59px;
  flex: none;
  border-radius: 10px 10px 0 0;
  border-bottom: 1px solid #4a4a4a;
  background: #3c3c3c;
}
.history {
  display: flex;
  gap: 21px;
  padding: 0 20px 0 16px;
}
.omnibox {
  display: flex;
  align-items: center;
  flex: 1;
  height: 42px;
  gap: 16px;
  padding: 0 17px 0 6px;
  border-radius: 21px;
  background: #282828;
}
.site-info {
  width: 30px;
  height: 30px;
  border-radius: 15px;
  background: #3c3c3c;
}
.url {
  flex: 1;
  min-width: 0;
  height: 30px;
  margin-left: -5px;
  padding: 0;
  border: 0;
  outline: 0;
  font: 16px/30px "Open Sans", "Noto Sans", sans-serif;
  color: transparent;
  background: linear-gradient(90deg, #f0f0f0 184px, #c7c7c7 184px);
  background-clip: text;
}
.actions {
  display: flex;
  align-items: center;
  gap: 20px;
  padding: 0 17px 0 22px;
}
.rule {
  width: 2px;
  height: 20px;
  background: #606060;
}

/* Page */
.viewport {
  position: relative;
  display: flex;
  flex: 1;
  min-height: 0;
}
.site {
  flex: 1;
  min-width: 0;
  overflow: hidden;
  background: #f0fff0;
  font-family: Lato, "Open Sans", sans-serif;
  color: #212529;
}
.site-header {
  display: flex;
  align-items: center;
  height: 81px;
  padding-bottom: 1px;
  background: #f5fffa;
}
.logo {
  margin-right: auto;
}
.logo-name {
  font: 700 41px Roboto, sans-serif;
  fill: #1ba5ab;
}
.logo-sub {
  font: 14px "Liberation Sans", sans-serif;
  fill: #8fc045;
}
.links {
  display: flex;
  gap: 32px;
  margin-right: 31px;
}
.links a {
  display: flex;
  align-items: center;
  gap: 6px;
  padding: 6px 0 2px;
  border-bottom: 4px solid transparent;
  font-size: 20px;
  line-height: 24px;
  color: inherit;
  text-decoration: none;
}
.links a.current {
  font-weight: 700;
  border-color: #4caf50;
}
.book {
  gap: 11px;
  height: 54px;
  padding: 0 24px;
  border-radius: 8px;
  background: #4caf50;
  font-size: 20px;
  font-weight: 700;
  color: #fff;
}
.heading {
  display: flex;
  align-items: center;
  justify-content: center;
  gap: 16px;
  margin: 0 0 76px;
  font-size: 35px;
  font-weight: 600;
  line-height: 28px;
  color: #333;
}
.grid {
  display: grid;
  grid-template-columns: repeat(4, 1fr);
  gap: 25px;
  max-width: 1500px;
  margin: 0 auto;
}
.card {
  display: flex;
  flex-direction: column;
  align-items: center;
  min-height: 328px;
  padding: 25px 18px;
  border-radius: 10px;
  background: #fff;
  box-shadow: 0 4px 30px rgba(0, 0, 0, 0.08);
  color: #212529;
  text-align: center;
  text-decoration: none;
}
.card.hovered {
  box-shadow: 0 4px 12px rgba(0, 0, 0, 0.2);
}
.card h2 {
  margin: 0 0 10px;
  font-size: 26px;
  font-weight: 600;
  line-height: 30px;
  color: #222;
}
.card p {
  margin: 0;
  font-size: 19px;
  line-height: 28px;
  color: #333;
}
.scrollbar {
  display: flex;
  flex-direction: column;
  align-items: center;
  width: 19px;
  flex: none;
  padding: 6px 0 4px;
  background: #2c2c2c;
}
.thumb {
  width: 11px;
  height: 160px;
  margin: 6px 0 auto;
  border-radius: 6px;
  background: #9f9f9f;
}
.status {
  position: absolute;
  left: 0;
  bottom: 0;
  height: 28px;
  padding: 0 12px 0 6px;
  border-radius: 0 5px 0 0;
  background: #1f2120;
  font-size: 14px;
  line-height: 28px;
  color: #c9c9c9;
}

/* Taskbar */
.taskbar {
  display: grid;
  grid-template-columns: 1fr auto 1fr;
  align-items: center;
  height: 60px;
  flex: none;
  border-top: 2px solid #443b44;
  background: linear-gradient(90deg, #241d30 0%, #241c30 22%, #2f1a35 32%, #332622 45%, #352422 57%, #3c1719 68%, #3b1914 80%, #2f1c1b 90%, #2d1c1c 100%);
  color: #fff;
}
.weather {
  justify-content: flex-start;
  gap: 6px;
  padding-left: 24px;
}
.weather-text,
.language,
.clock {
  display: flex;
  flex-direction: column;
  font-size: 15px;
  line-height: 20px;
}
.weather-text {
  align-items: flex-start;
}
.dim {
  color: #c9c4cc;
}
.dock {
  display: flex;
  align-items: center;
}
.app {
  position: relative;
  width: 55px;
  height: 50px;
  border-radius: 6px;
}
.app.active {
  background: rgba(255, 255, 255, 0.08);
}
.app.running::after {
  content: "";
  position: absolute;
  bottom: 1px;
  width: 8px;
  height: 4px;
  border-radius: 2px;
  background: #9c8e8e;
}
.app.active::after {
  width: 20px;
  background: #dba0e6;
}
.search {
  display: flex;
  align-items: center;
  width: 275px;
  height: 40px;
  gap: 12px;
  margin: 0 3px 0 4px;
  padding: 0 24px 0 13px;
  border: 1px solid rgba(255, 255, 255, 0.12);
  border-radius: 20px;
  background: rgba(255, 255, 255, 0.14);
}
.search input {
  flex: 1;
  min-width: 0;
  padding: 0;
  border: 0;
  outline: 0;
  background: none;
  font: 16px/22px "Open Sans", "Noto Sans", sans-serif;
  color: #fff;
}
.search input::placeholder {
  color: #d8d0d6;
}
.tray {
  display: flex;
  align-items: center;
  justify-content: flex-end;
  padding-right: 24px;
}
.tray-button {
  width: 40px;
  height: 40px;
}
.language {
  align-items: center;
  margin: 0 22px 0 12px;
}
.signals {
  display: flex;
  align-items: center;
  gap: 10px;
}
.clock {
  align-items: flex-end;
  margin-left: 20px;
}
</style>
